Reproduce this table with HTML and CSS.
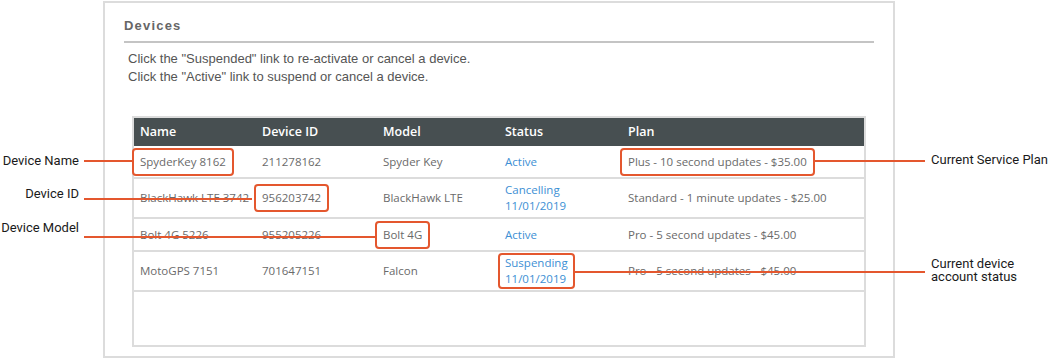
FILE: index.html
```html
<!DOCTYPE html>
<html lang="en">
<head>
    <meta charset="UTF-8">
    <title>Devices</title>
    <link rel="stylesheet" href="styles.css">
</head>
<body>
    <div class="panel">
        <h2 class="title">Devices</h2>
        <div class="intro">
            <p>Click the "Suspended" link to re-activate or cancel a device.</p>
            <p>Click the "Active" link to suspend or cancel a device.</p>
        </div>

        <div class="devices">
            <div class="row head">
                <div>Name</div>
                <div>Device ID</div>
                <div>Model</div>
                <div>Status</div>
                <div>Plan</div>
            </div>
            <div class="row">
                <div><span class="callout">SpyderKey 8162</span></div>
                <div>211278162</div>
                <div>Spyder Key</div>
                <div><a href="#">Active</a></div>
                <div><span class="callout">Plus - 10 second updates - $35.00</span></div>
            </div>
            <div class="row tall">
                <div>BlackHawk LTE 3742</div>
                <div><span class="callout">956203742</span></div>
                <div>BlackHawk LTE</div>
                <div><a href="#">Cancelling<br>11/01/2019</a></div>
                <div>Standard - 1 minute updates - $25.00</div>
            </div>
            <div class="row">
                <div>Bolt 4G 5226</div>
                <div>955205226</div>
                <div><span class="callout">Bolt 4G</span></div>
                <div><a href="#">Active</a></div>
                <div>Pro - 5 second updates - $45.00</div>
            </div>
            <div class="row tall">
                <div>MotoGPS 7151</div>
                <div>701647151</div>
                <div>Falcon</div>
                <div><a href="#" class="callout slim">Suspending<br>11/01/2019</a></div>
                <div>Pro - 5 second updates - $45.00</div>
            </div>
        </div>
    </div>

    <!-- callout labels and leader lines -->
    <div class="notes">
        <svg class="leaders" width="1048" height="359" viewBox="0 0 1048 359">
            <g stroke="#e4572e" stroke-width="2">
                <line x1="84" y1="161" x2="132" y2="161"/>
                <line x1="84" y1="199" x2="252" y2="199"/>
                <line x1="84" y1="237" x2="375" y2="237"/>
                <line x1="814" y1="161" x2="925" y2="161"/>
                <line x1="573" y1="272" x2="925" y2="272"/>
            </g>
        </svg>
        <span class="note left" style="top:153px">Device Name</span>
        <span class="note left" style="top:186px">Device ID</span>
        <span class="note left" style="top:220px">Device Model</span>
        <span class="note right" style="top:153px">Current Service Plan</span>
        <span class="note right" style="top:257px">Current device<br>account status</span>
    </div>
</body>
</html>
```

FILE: styles.css
```css
body{
    margin: 0;
    width: 1048px;
    height: 359px;
    position: relative;
    background: #fff;
    font-family: "Liberation Sans", Arial, sans-serif;
}
.panel{
    box-sizing: border-box;
    width: 792px;
    height: 357px;
    margin: 1px 0 0 103px;
    border: 2px solid #dcdcdc;
    padding: 14px 19px 0 19px;
}
.title{
    margin: 0;
    padding-bottom: 6px;
    border-bottom: 2px solid #c4c4c4;
    font-size: 13px;
    line-height: 18px;
    letter-spacing: 1.2px;
    color: #666;
}
.intro{
    margin: 7px 0 0 4px;
}
.intro p{
    margin: 0;
    font-size: 13px;
    line-height: 18px;
    color: #555;
}

.devices{
    margin: 30px 8px 0 8px;
    height: 231px;
    box-sizing: border-box;
    border: 2px solid #dcdcdc;
    font-family: "Open Sans", "Noto Sans", sans-serif;
    font-size: 11.5px;
    color: #6a6a6a;
}
.row{
    display: grid;
    grid-template-columns: 122px 121px 122px 123px 1fr;
    align-items: center;
    height: 31px;
    border-bottom: 2px solid #dcdcdc;
    line-height: 16px;
}
.row.tall{
    height: 38px;
}
.row > div{
    padding-left: 6px;
    white-space: nowrap;
}
.row.head{
    height: 28px;
    border-bottom: none;
    background: #474f51;
    color: #fff;
    font-weight: 600;
    font-size: 12.5px;
}
.row a{
    color: #3d8fd4;
    text-decoration: none;
}

/* orange boxes drawn round the described cells */
.callout{
    display: inline-block;
    padding: 4px 6px;
    margin: -6px -8px;
    border: 2px solid #e4572e;
    border-radius: 4px;
}
.callout.slim{
    padding: 0 5px;
    margin: -2px -7px;
}

.notes{
    position: absolute;
    top: 0;
    left: 0;
    width: 1048px;
    height: 359px;
    pointer-events: none;
}
.leaders{
    position: absolute;
    top: 0;
    left: 0;
}
.note{
    position: absolute;
    font-family: Roboto, sans-serif;
    font-size: 13px;
    line-height: 15px;
    color: #1a1a1a;
}
.note.left{
    right: 969px;
    text-align: right;
}
.note.right{
    left: 931px;
    line-height: 13px;
}
```
